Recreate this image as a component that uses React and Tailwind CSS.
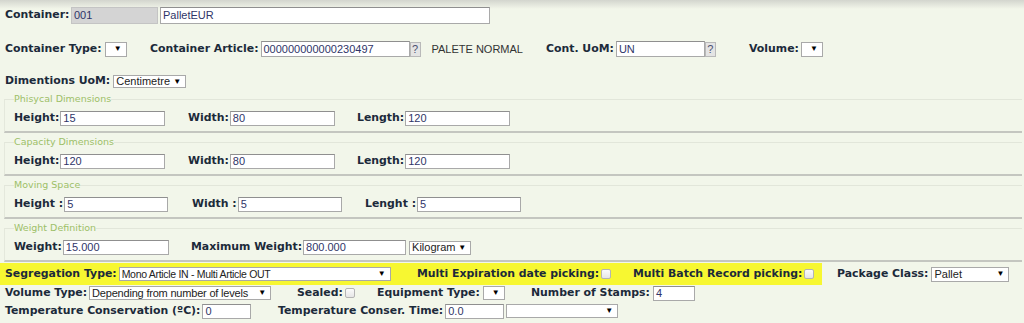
import React from 'react';

const lbl = "font-['DejaVu_Sans',Verdana,sans-serif] font-bold text-[10.9px] leading-none text-[#1c2a3a] whitespace-nowrap";
const txt = "font-['Liberation_Sans',Arial,sans-serif] text-[11px] leading-none whitespace-nowrap";

const Label = ({ children, className = '' }) => <span className={`${lbl} ${className}`}>{children}</span>;

const Field = ({ value = '', w, h = 'h-[15px]', gray = false, className = '' }) => (
    <div
        className={`${txt} ${w} ${h} ${gray ? 'bg-[#d4d4d4] border-[#c4c4c4]' : 'bg-white border-[#a9a9a9] border-t-[#8f8f8f]'} border flex items-center px-[2px] text-[#2f3568] shrink-0 ${className}`}
    >
        {value}
    </div>
);

const Select = ({ value = '', w, h = 'h-[14px]', className = '', textClass = '' }) => (
    <div
        className={`${txt} ${w} ${h} bg-white border border-[#a9a9a9] flex items-center justify-between pl-[2px] pr-[4px] text-[#222] shrink-0 ${className}`}
    >
        <span className={textClass}>{value}</span>
        <span className="text-[8px] text-black">▼</span>
    </div>
);

const Help = () => (
    <div className={`${txt} w-[11px] h-[15px] bg-[#e4e4e4] border border-[#b9b9b9] flex items-center justify-center text-[#4a5070] shrink-0`}>?</div>
);

const Check = ({ className = '' }) => (
    <div className={`w-[10px] h-[10px] rounded-[2px] border border-[#b4b4b4] bg-[linear-gradient(to_bottom,#fbfbfb,#e6e6e6)] shrink-0 ${className}`} />
);

const Group = ({ title, children, className = '' }) => (
    <fieldset className={`ml-[4px] mr-[2px] border-l border-t border-b-2 border-l-[#e4e8dc] border-t-[#e2e6da] border-b-[#c4c6c0] pl-[9px] pb-[5px] ${className}`}>
        <legend className="font-['DejaVu_Sans',Verdana,sans-serif] text-[9.5px] leading-[12px] text-[#9dbf68] px-0">{title}</legend>
        <div className="mt-[6px] h-[15px] flex items-center">{children}</div>
    </fieldset>
);

const Item = ({ w, children }) => <div className={`${w} flex items-center shrink-0`}>{children}</div>;

export default function App() {
    return (
        <div className="w-[1024px] h-[323px] overflow-hidden bg-[#f2f6ea] bg-[linear-gradient(to_bottom,#d3d5ce_0px,#f2f6ea_9px)]">
            {/* Container */}
            <div className="pt-[7px] pl-[5px] h-[24px] flex items-center">
                <Item w="w-[66px]"><Label>Container:</Label></Item>
                <Field value="001" w="w-[87px]" h="h-[17px]" gray />
                <Field value="PalletEUR" w="w-[330px]" h="h-[17px]" className="ml-[2px]" />
            </div>

            {/* Type / article / uom */}
            <div className="mt-[17px] pl-[5px] h-[16px] flex items-center">
                <Item w="w-[145px]">
                    <Label>Container Type:</Label>
                    <Select w="w-[22px]" h="h-[15px]" className="ml-[3px] pl-[6px]" />
                </Item>
                <Item w="w-[396px]">
                    <Label>Container Article:</Label>
                    <Field value="000000000000230497" w="w-[149px]" h="h-[16px]" className="ml-[2px]" />
                    <Help />
                    <span className={`${txt} ml-[11px] text-[#333]`}>PALETE NORMAL</span>
                </Item>
                <Item w="w-[203px]">
                    <Label>Cont. UoM:</Label>
                    <Field value="UN" w="w-[89px]" h="h-[16px]" className="ml-[2px]" />
                    <Help />
                </Item>
                <Item w="w-[100px]">
                    <Label>Volume:</Label>
                    <Select w="w-[22px]" h="h-[15px]" className="ml-[2px] pl-[6px]" />
                </Item>
            </div>

            {/* Dimensions UoM */}
            <div className="mt-[18px] pl-[5px] h-[13px] flex items-center">
                <Label>Dimentions UoM:</Label>
                <Select value="Centimetre" w="w-[73px]" h="h-[13px]" className="ml-[3px]" />
            </div>

            <Group title="Phisycal Dimensions" className="mt-[5px]">
                <Item w="w-[174px]"><Label>Height:</Label><Field value="15" w="w-[105px]" className="ml-[1px]" /></Item>
                <Item w="w-[169px]"><Label>Width:</Label><Field value="80" w="w-[105px]" className="ml-[1px]" /></Item>
                <Item w="w-[200px]"><Label>Length:</Label><Field value="120" w="w-[105px]" className="ml-[1px]" /></Item>
            </Group>

            <Group title="Capacity Dimensions" className="mt-[3px]">
                <Item w="w-[174px]"><Label>Height:</Label><Field value="120" w="w-[105px]" className="ml-[1px]" /></Item>
                <Item w="w-[169px]"><Label>Width:</Label><Field value="80" w="w-[105px]" className="ml-[1px]" /></Item>
                <Item w="w-[200px]"><Label>Length:</Label><Field value="120" w="w-[105px]" className="ml-[1px]" /></Item>
            </Group>

            <Group title="Moving Space" className="mt-[3px]">
                <Item w="w-[178px]"><Label>Height :</Label><Field value="5" w="w-[104px]" className="ml-[1px]" /></Item>
                <Item w="w-[173px]"><Label>Width :</Label><Field value="5" w="w-[104px]" className="ml-[1px]" /></Item>
                <Item w="w-[200px]"><Label>Lenght :</Label><Field value="5" w="w-[104px]" className="ml-[1px]" /></Item>
            </Group>

            <Group title="Weight Definition" className="mt-[3px]">
                <Item w="w-[177px]"><Label>Weight:</Label><Field value="15.000" w="w-[106px]" className="ml-[1px]" /></Item>
                <Item w="w-[300px]">
                    <Label>Maximum Weight:</Label>
                    <Field value="800.000" w="w-[103px]" className="ml-[1px]" />
                    <Select value="Kilogram" w="w-[62px]" className="ml-[3px]" />
                </Item>
            </Group>

            {/* Segregation - highlighted */}
            <div className="mt-[1px] h-[22px] flex items-center">
                <div className="h-[22px] w-[822px] bg-[#f7f731] pl-[5px] flex items-center shrink-0">
                    <Item w="w-[412px]">
                        <Label>Segregation Type:</Label>
                        <Select
                            value="Mono Article IN - Multi Article OUT"
                            w="w-[272px]"
                            className="ml-[2px]"
                            textClass="text-[10.5px] tracking-[-0.3px]"
                        />
                    </Item>
                    <Item w="w-[216px]">
                        <Label>Multi Expiration date picking:</Label>
                        <Check className="ml-[2px]" />
                    </Item>
                    <Item w="w-[180px]">
                        <Label>Multi Batch Record picking:</Label>
                        <Check className="ml-[2px]" />
                    </Item>
                </div>
                <Item w="w-[190px]">
                    <span className="ml-[15px]" />
                    <Label>Package Class:</Label>
                    <Select value="Pallet" w="w-[78px]" h="h-[15px]" className="ml-[3px]" />
                </Item>
            </div>

            <div className="pl-[5px] h-[16px] flex items-center">
                <Item w="w-[292px]">
                    <Label>Volume Type:</Label>
                    <Select value="Depending from number of levels" w="w-[182px]" className="ml-[2px]" textClass="tracking-[-0.2px]" />
                </Item>
                <Item w="w-[80px]">
                    <Label>Sealed:</Label>
                    <Check className="ml-[2px]" />
                </Item>
                <Item w="w-[154px]">
                    <Label>Equipment Type:</Label>
                    <Select w="w-[22px]" className="ml-[3px] pl-[6px]" />
                </Item>
                <Item w="w-[200px]">
                    <Label>Number of Stamps:</Label>
                    <Field value="4" w="w-[42px]" className="ml-[3px]" />
                </Item>
            </div>

            <div className="mt-[2px] pl-[5px] h-[16px] flex items-center">
                <Item w="w-[273px]">
                    <Label>Temperature Conservation (ºC):</Label>
                    <Field value="0" w="w-[49px]" className="ml-[2px]" />
                </Item>
                <Item w="w-[400px]">
                    <Label>Temperature Conser. Time:</Label>
                    <Field value="0.0" w="w-[59px]" className="ml-[2px]" />
                    <Select w="w-[112px]" className="ml-[2px]" />
                </Item>
            </div>
        </div>
    );
}
